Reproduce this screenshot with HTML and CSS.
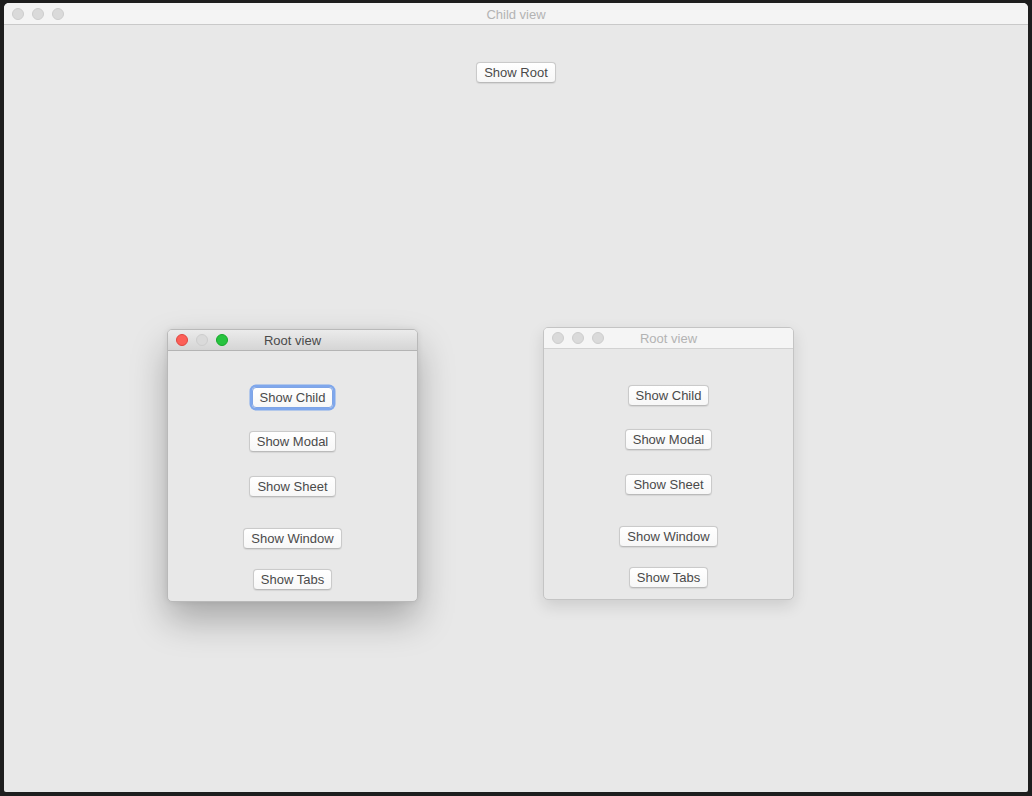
FILE: index.html
```html
<!DOCTYPE html>
<html lang="en">
<head>
    <meta charset="UTF-8">
    <meta name="viewport" content="width=device-width, initial-scale=1.0">
    <title>Child view</title>
    <link rel="stylesheet" href="styles.css">
</head>
<body>
    <!-- Main window -->
    <div class="window main inactive">
        <div class="titlebar">
            <div class="lights">
                <span class="light"></span>
                <span class="light"></span>
                <span class="light"></span>
            </div>
            <div class="title">Child view</div>
        </div>
        <div class="content main-content">
            <button class="btn">Show Root</button>
        </div>

        <!-- Active root window -->
        <div class="window child active left-win">
            <div class="titlebar">
                <div class="lights">
                    <span class="light close"></span>
                    <span class="light"></span>
                    <span class="light zoom"></span>
                </div>
                <div class="title">Root view</div>
            </div>
            <div class="content stack">
                <button class="btn focused first">Show Child</button>
                <button class="btn modal">Show Modal</button>
                <button class="btn sheet">Show Sheet</button>
                <button class="btn win">Show Window</button>
                <button class="btn tabs">Show Tabs</button>
            </div>
        </div>

        <!-- Inactive root window -->
        <div class="window child inactive right-win">
            <div class="titlebar">
                <div class="lights">
                    <span class="light"></span>
                    <span class="light"></span>
                    <span class="light"></span>
                </div>
                <div class="title">Root view</div>
            </div>
            <div class="content stack">
                <button class="btn first">Show Child</button>
                <button class="btn modal">Show Modal</button>
                <button class="btn sheet">Show Sheet</button>
                <button class="btn win">Show Window</button>
                <button class="btn tabs">Show Tabs</button>
            </div>
        </div>
    </div>
</body>
</html>
```

FILE: styles.css
```css
body {
    margin: 0;
    padding: 3px 4px 4px 4px;
    background-color: #1e1e1e;
    font-family: "Helvetica Neue", "Liberation Sans", Arial, sans-serif;
    font-size: 13px;
}

.window {
    box-sizing: border-box;
    background-color: #e8e8e8;
    display: flex;
    flex-direction: column;
}

.main {
    position: relative;
    width: 1024px;
    height: 789px;
    border-radius: 5px 5px 2px 2px;
    overflow: hidden;
}

.titlebar {
    position: relative;
    display: flex;
    align-items: center;
    height: 20px;
    padding-top: 1px;
    flex-shrink: 0;
    border-bottom: 1px solid #c9c9c9;
    background-color: #f4f4f4;
}

.lights {
    display: flex;
    gap: 8px;
    padding-left: 8px;
}

.light {
    box-sizing: border-box;
    width: 12px;
    height: 12px;
    border-radius: 50%;
    background-color: #dadada;
    border: 1px solid #cdcdcd;
}

.light.close {
    background-color: #fc5f57;
    border-color: #df4640;
}

.light.zoom {
    background-color: #27c33f;
    border-color: #16a92a;
}

.title {
    position: absolute;
    left: 0;
    right: 0;
    text-align: center;
    color: #b3b3b3;
    pointer-events: none;
}

.content {
    flex: 1;
    display: flex;
    flex-direction: column;
    align-items: center;
}

.main-content {
    padding-top: 37px;
}

/* Root view windows */
.child {
    position: absolute;
    width: 251px;
    height: 273px;
    border: 1px solid #c4c4c4;
    border-radius: 5px;
}

.child .titlebar {
    height: 20px;
    padding-top: 0;
    border-radius: 4px 4px 0 0;
}

.active .titlebar {
    background: linear-gradient(#ebebeb, #d5d5d5);
    border-bottom-color: #b4b4b4;
}

.active .title {
    color: #4a4a4a;
}

.inactive.child .titlebar {
    background-color: #f5f5f5;
    border-bottom-color: #d2d2d2;
}

.left-win {
    left: 163px;
    top: 326px;
    border-color: #b9b9b9;
    box-shadow: 0 18px 36px rgba(0, 0, 0, 0.28), 0 0 6px rgba(0, 0, 0, 0.08);
}

.right-win {
    left: 539px;
    top: 324px;
    box-shadow: 0 6px 16px rgba(0, 0, 0, 0.12);
}

.stack .first {
    margin-top: 36px;
}

.stack .modal {
    margin-top: 23px;
}

.stack .sheet {
    margin-top: 24px;
}

.stack .win {
    margin-top: 31px;
}

.stack .tabs {
    margin-top: 20px;
}

.btn {
    box-sizing: border-box;
    height: 21px;
    padding: 0 7px;
    font-family: inherit;
    font-size: 13px;
    line-height: 19px;
    color: #4a4a4a;
    background: linear-gradient(#ffffff, #f7f7f7);
    border: 1px solid #cacaca;
    border-bottom-color: #bababa;
    border-radius: 4px;
    box-shadow: 0 0.5px 1px rgba(0, 0, 0, 0.08);
    margin: 0;
}

.btn.focused {
    border-color: #7ea4e6;
    box-shadow: 0 0 0 2.5px #7fa7ec;
}
```
